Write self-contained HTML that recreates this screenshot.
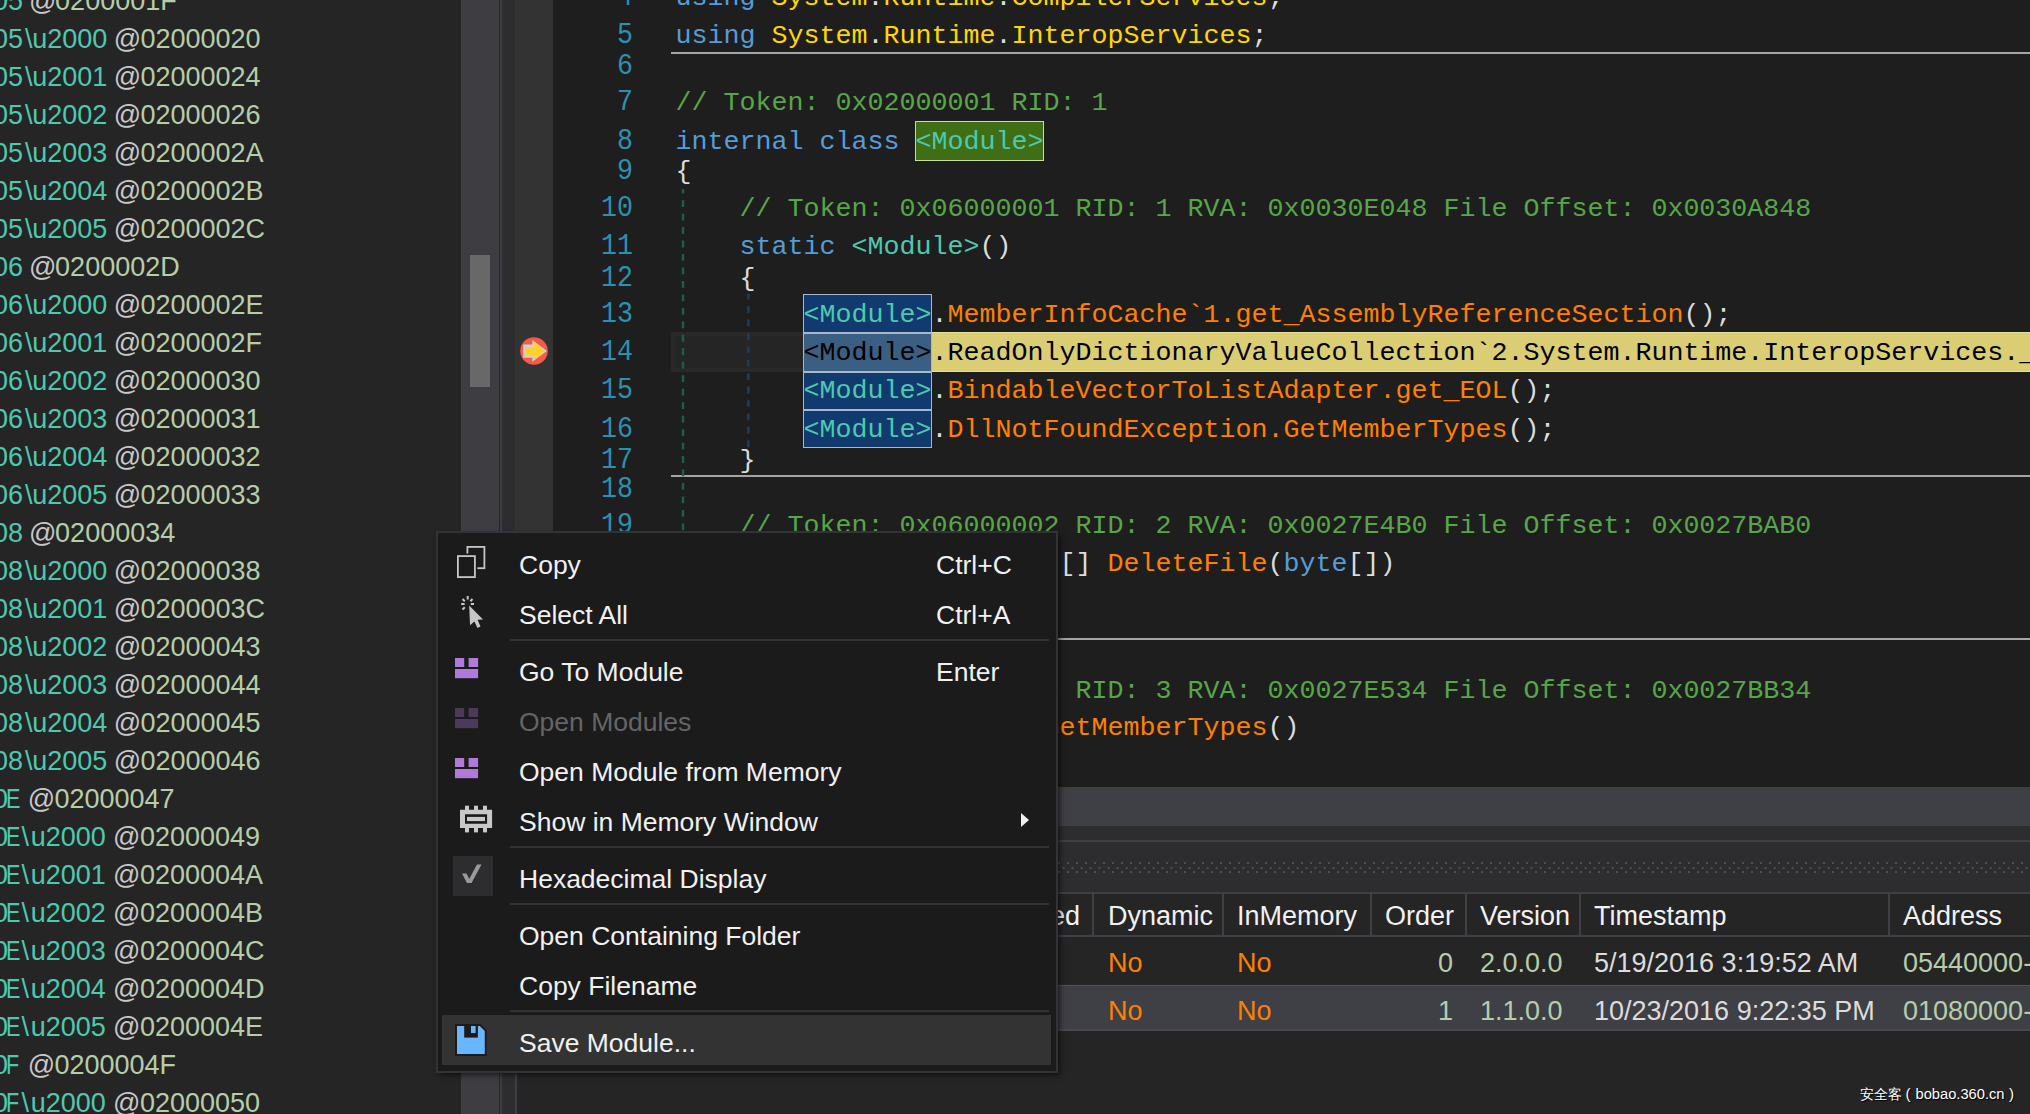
<!DOCTYPE html><html><head><meta charset="utf-8"><style>
*{margin:0;padding:0;box-sizing:border-box}
html,body{width:2030px;height:1114px;overflow:hidden;background:#1e1e1e}
.a{position:absolute}
.mono{font-family:"Liberation Mono",monospace;font-size:26.67px;line-height:40px;white-space:pre}
.sans{font-family:"Liberation Sans",sans-serif;white-space:pre}
.kw{color:#569cd6}.ns{color:#ffd700}.cm{color:#57a64a}.ty{color:#4ec9b0}.me{color:#ff8000}.pu{color:#dcdcdc}
.ln{color:#2b91af;text-align:right;width:80px}
.lp{font-size:27px;line-height:40px}
.t{color:#4ec9b0}.at{color:#c8c8c8}.hx{color:#b5cea8}
.mi{font-size:26.5px;line-height:40px;color:#f1f1f1}
</style></head><body>
<div class="a" style="left:0;top:0;width:461px;height:1114px;background:#252526"></div>
<div class="a sans lp t" style="left:-7px;top:-19px">05</div>
<div class="a sans lp at" style="left:29px;top:-19px">@</div>
<div class="a sans lp hx" style="left:55.1px;top:-19px">0200001F</div>
<div class="a sans lp t" style="left:-7px;top:19px">05</div>
<div class="a sans lp t" style="left:25px;top:19px">\</div>
<div class="a sans lp t" style="left:32.2px;top:19px">u2000</div>
<div class="a sans lp at" style="left:113.8px;top:19px">@</div>
<div class="a sans lp hx" style="left:140.4px;top:19px">02000020</div>
<div class="a sans lp t" style="left:-7px;top:57px">05</div>
<div class="a sans lp t" style="left:25px;top:57px">\</div>
<div class="a sans lp t" style="left:32.2px;top:57px">u2001</div>
<div class="a sans lp at" style="left:113.8px;top:57px">@</div>
<div class="a sans lp hx" style="left:140.4px;top:57px">02000024</div>
<div class="a sans lp t" style="left:-7px;top:95px">05</div>
<div class="a sans lp t" style="left:25px;top:95px">\</div>
<div class="a sans lp t" style="left:32.2px;top:95px">u2002</div>
<div class="a sans lp at" style="left:113.8px;top:95px">@</div>
<div class="a sans lp hx" style="left:140.4px;top:95px">02000026</div>
<div class="a sans lp t" style="left:-7px;top:133px">05</div>
<div class="a sans lp t" style="left:25px;top:133px">\</div>
<div class="a sans lp t" style="left:32.2px;top:133px">u2003</div>
<div class="a sans lp at" style="left:113.8px;top:133px">@</div>
<div class="a sans lp hx" style="left:140.4px;top:133px">0200002A</div>
<div class="a sans lp t" style="left:-7px;top:171px">05</div>
<div class="a sans lp t" style="left:25px;top:171px">\</div>
<div class="a sans lp t" style="left:32.2px;top:171px">u2004</div>
<div class="a sans lp at" style="left:113.8px;top:171px">@</div>
<div class="a sans lp hx" style="left:140.4px;top:171px">0200002B</div>
<div class="a sans lp t" style="left:-7px;top:209px">05</div>
<div class="a sans lp t" style="left:25px;top:209px">\</div>
<div class="a sans lp t" style="left:32.2px;top:209px">u2005</div>
<div class="a sans lp at" style="left:113.8px;top:209px">@</div>
<div class="a sans lp hx" style="left:140.4px;top:209px">0200002C</div>
<div class="a sans lp t" style="left:-7px;top:247px">06</div>
<div class="a sans lp at" style="left:29px;top:247px">@</div>
<div class="a sans lp hx" style="left:55.1px;top:247px">0200002D</div>
<div class="a sans lp t" style="left:-7px;top:285px">06</div>
<div class="a sans lp t" style="left:25px;top:285px">\</div>
<div class="a sans lp t" style="left:32.2px;top:285px">u2000</div>
<div class="a sans lp at" style="left:113.8px;top:285px">@</div>
<div class="a sans lp hx" style="left:140.4px;top:285px">0200002E</div>
<div class="a sans lp t" style="left:-7px;top:323px">06</div>
<div class="a sans lp t" style="left:25px;top:323px">\</div>
<div class="a sans lp t" style="left:32.2px;top:323px">u2001</div>
<div class="a sans lp at" style="left:113.8px;top:323px">@</div>
<div class="a sans lp hx" style="left:140.4px;top:323px">0200002F</div>
<div class="a sans lp t" style="left:-7px;top:361px">06</div>
<div class="a sans lp t" style="left:25px;top:361px">\</div>
<div class="a sans lp t" style="left:32.2px;top:361px">u2002</div>
<div class="a sans lp at" style="left:113.8px;top:361px">@</div>
<div class="a sans lp hx" style="left:140.4px;top:361px">02000030</div>
<div class="a sans lp t" style="left:-7px;top:399px">06</div>
<div class="a sans lp t" style="left:25px;top:399px">\</div>
<div class="a sans lp t" style="left:32.2px;top:399px">u2003</div>
<div class="a sans lp at" style="left:113.8px;top:399px">@</div>
<div class="a sans lp hx" style="left:140.4px;top:399px">02000031</div>
<div class="a sans lp t" style="left:-7px;top:437px">06</div>
<div class="a sans lp t" style="left:25px;top:437px">\</div>
<div class="a sans lp t" style="left:32.2px;top:437px">u2004</div>
<div class="a sans lp at" style="left:113.8px;top:437px">@</div>
<div class="a sans lp hx" style="left:140.4px;top:437px">02000032</div>
<div class="a sans lp t" style="left:-7px;top:475px">06</div>
<div class="a sans lp t" style="left:25px;top:475px">\</div>
<div class="a sans lp t" style="left:32.2px;top:475px">u2005</div>
<div class="a sans lp at" style="left:113.8px;top:475px">@</div>
<div class="a sans lp hx" style="left:140.4px;top:475px">02000033</div>
<div class="a sans lp t" style="left:-7px;top:513px">08</div>
<div class="a sans lp at" style="left:29px;top:513px">@</div>
<div class="a sans lp hx" style="left:55.1px;top:513px">02000034</div>
<div class="a sans lp t" style="left:-7px;top:551px">08</div>
<div class="a sans lp t" style="left:25px;top:551px">\</div>
<div class="a sans lp t" style="left:32.2px;top:551px">u2000</div>
<div class="a sans lp at" style="left:113.8px;top:551px">@</div>
<div class="a sans lp hx" style="left:140.4px;top:551px">02000038</div>
<div class="a sans lp t" style="left:-7px;top:589px">08</div>
<div class="a sans lp t" style="left:25px;top:589px">\</div>
<div class="a sans lp t" style="left:32.2px;top:589px">u2001</div>
<div class="a sans lp at" style="left:113.8px;top:589px">@</div>
<div class="a sans lp hx" style="left:140.4px;top:589px">0200003C</div>
<div class="a sans lp t" style="left:-7px;top:627px">08</div>
<div class="a sans lp t" style="left:25px;top:627px">\</div>
<div class="a sans lp t" style="left:32.2px;top:627px">u2002</div>
<div class="a sans lp at" style="left:113.8px;top:627px">@</div>
<div class="a sans lp hx" style="left:140.4px;top:627px">02000043</div>
<div class="a sans lp t" style="left:-7px;top:665px">08</div>
<div class="a sans lp t" style="left:25px;top:665px">\</div>
<div class="a sans lp t" style="left:32.2px;top:665px">u2003</div>
<div class="a sans lp at" style="left:113.8px;top:665px">@</div>
<div class="a sans lp hx" style="left:140.4px;top:665px">02000044</div>
<div class="a sans lp t" style="left:-7px;top:703px">08</div>
<div class="a sans lp t" style="left:25px;top:703px">\</div>
<div class="a sans lp t" style="left:32.2px;top:703px">u2004</div>
<div class="a sans lp at" style="left:113.8px;top:703px">@</div>
<div class="a sans lp hx" style="left:140.4px;top:703px">02000045</div>
<div class="a sans lp t" style="left:-7px;top:741px">08</div>
<div class="a sans lp t" style="left:25px;top:741px">\</div>
<div class="a sans lp t" style="left:32.2px;top:741px">u2005</div>
<div class="a sans lp at" style="left:113.8px;top:741px">@</div>
<div class="a sans lp hx" style="left:140.4px;top:741px">02000046</div>
<div class="a sans lp t" style="left:-7px;top:779px">0</div>
<div class="a sans lp t" style="left:6.3px;top:779px;transform:scaleX(0.8);transform-origin:0 0">E</div>
<div class="a sans lp at" style="left:27.7px;top:779px">@</div>
<div class="a sans lp hx" style="left:54.5px;top:779px">02000047</div>
<div class="a sans lp t" style="left:-7px;top:817px">0</div>
<div class="a sans lp t" style="left:6.3px;top:817px;transform:scaleX(0.8);transform-origin:0 0">E</div>
<div class="a sans lp t" style="left:21.5px;top:817px">\</div>
<div class="a sans lp t" style="left:30.8px;top:817px">u2000</div>
<div class="a sans lp at" style="left:113px;top:817px">@</div>
<div class="a sans lp hx" style="left:140px;top:817px">02000049</div>
<div class="a sans lp t" style="left:-7px;top:855px">0</div>
<div class="a sans lp t" style="left:6.3px;top:855px;transform:scaleX(0.8);transform-origin:0 0">E</div>
<div class="a sans lp t" style="left:21.5px;top:855px">\</div>
<div class="a sans lp t" style="left:30.8px;top:855px">u2001</div>
<div class="a sans lp at" style="left:113px;top:855px">@</div>
<div class="a sans lp hx" style="left:140px;top:855px">0200004A</div>
<div class="a sans lp t" style="left:-7px;top:893px">0</div>
<div class="a sans lp t" style="left:6.3px;top:893px;transform:scaleX(0.8);transform-origin:0 0">E</div>
<div class="a sans lp t" style="left:21.5px;top:893px">\</div>
<div class="a sans lp t" style="left:30.8px;top:893px">u2002</div>
<div class="a sans lp at" style="left:113px;top:893px">@</div>
<div class="a sans lp hx" style="left:140px;top:893px">0200004B</div>
<div class="a sans lp t" style="left:-7px;top:931px">0</div>
<div class="a sans lp t" style="left:6.3px;top:931px;transform:scaleX(0.8);transform-origin:0 0">E</div>
<div class="a sans lp t" style="left:21.5px;top:931px">\</div>
<div class="a sans lp t" style="left:30.8px;top:931px">u2003</div>
<div class="a sans lp at" style="left:113px;top:931px">@</div>
<div class="a sans lp hx" style="left:140px;top:931px">0200004C</div>
<div class="a sans lp t" style="left:-7px;top:969px">0</div>
<div class="a sans lp t" style="left:6.3px;top:969px;transform:scaleX(0.8);transform-origin:0 0">E</div>
<div class="a sans lp t" style="left:21.5px;top:969px">\</div>
<div class="a sans lp t" style="left:30.8px;top:969px">u2004</div>
<div class="a sans lp at" style="left:113px;top:969px">@</div>
<div class="a sans lp hx" style="left:140px;top:969px">0200004D</div>
<div class="a sans lp t" style="left:-7px;top:1007px">0</div>
<div class="a sans lp t" style="left:6.3px;top:1007px;transform:scaleX(0.8);transform-origin:0 0">E</div>
<div class="a sans lp t" style="left:21.5px;top:1007px">\</div>
<div class="a sans lp t" style="left:30.8px;top:1007px">u2005</div>
<div class="a sans lp at" style="left:113px;top:1007px">@</div>
<div class="a sans lp hx" style="left:140px;top:1007px">0200004E</div>
<div class="a sans lp t" style="left:-7px;top:1045px">0</div>
<div class="a sans lp t" style="left:6.3px;top:1045px;transform:scaleX(0.8);transform-origin:0 0">F</div>
<div class="a sans lp at" style="left:27.7px;top:1045px">@</div>
<div class="a sans lp hx" style="left:54.5px;top:1045px">0200004F</div>
<div class="a sans lp t" style="left:-7px;top:1083px">0</div>
<div class="a sans lp t" style="left:6.3px;top:1083px;transform:scaleX(0.8);transform-origin:0 0">F</div>
<div class="a sans lp t" style="left:21.5px;top:1083px">\</div>
<div class="a sans lp t" style="left:30.8px;top:1083px">u2000</div>
<div class="a sans lp at" style="left:113px;top:1083px">@</div>
<div class="a sans lp hx" style="left:140px;top:1083px">02000050</div>
<div class="a" style="left:461px;top:0;width:38px;height:1114px;background:#3e3e42"></div>
<div class="a" style="left:470px;top:255px;width:20px;height:132px;background:#686868"></div>
<div class="a" style="left:499px;top:0;width:1px;height:1114px;background:#252526"></div>
<div class="a" style="left:500px;top:0;width:2px;height:1114px;background:#3e3e42"></div>
<div class="a" style="left:502px;top:0;width:13px;height:1114px;background:#2d2d30"></div>
<div class="a" style="left:515px;top:0;width:38px;height:787px;background:#333333"></div>
<div class="a" style="left:553px;top:0;width:1477px;height:787px;background:#1e1e1e"></div>
<div class="a" style="left:671px;top:52px;width:1359px;height:2px;background:#a5a5a5"></div>
<div class="a" style="left:671px;top:475px;width:1359px;height:2px;background:#a5a5a5"></div>
<div class="a" style="left:671px;top:638px;width:1359px;height:2px;background:#a5a5a5"></div>
<div class="a" style="left:671px;top:332px;width:134px;height:40px;background:#252525;border:4px solid #292929;border-right:none"></div>
<div class="a" style="left:932px;top:332px;width:1098px;height:40px;background:#dbcd73;border-top:1px solid #e6de92;border-bottom:1px solid #e6de92"></div>
<div class="a" style="left:915px;top:121px;width:129px;height:40px;background:#3f6e14;border:1px solid #c8dca0"></div>
<div class="a" style="left:803px;top:294px;width:129px;height:39px;background:#113a6e;border:1px solid #a8b8cc"></div>
<div class="a" style="left:803px;top:333px;width:129px;height:39px;background:#3a5f82;border:1px solid #a8b8cc"></div>
<div class="a" style="left:803px;top:371.5px;width:129px;height:38px;background:#113a6e;border:1px solid #a8b8cc"></div>
<div class="a" style="left:803px;top:409.5px;width:129px;height:38.5px;background:#113a6e;border:1px solid #a8b8cc"></div>
<svg class="a" style="left:681px;top:189px" width="4" height="600"><line x1="2" y1="0" x2="2" y2="600" stroke="#1d5f4f" stroke-width="2.4" stroke-dasharray="6.8 6.67" stroke-dashoffset="2.3"/></svg>
<svg class="a" style="left:746px;top:294px" width="4" height="155"><line x1="2.3" y1="0" x2="2.3" y2="155" stroke="#19405e" stroke-width="2.4" stroke-dasharray="6.8 6.6" stroke-dashoffset="1.2"/></svg>
<div class="a mono ln" style="left:553px;top:-22px;width:80px;transform:scaleY(1.12);transform-origin:0 27px">4</div>
<div class="a mono" style="left:675.6px;top:-22px"><span class="kw">using</span><span class="pu"> </span><span class="ns">System</span><span class="pu">.</span><span class="ns">Runtime</span><span class="pu">.</span><span class="ns">CompilerServices</span><span class="pu">;</span></div>
<div class="a mono ln" style="left:553px;top:16px;width:80px;transform:scaleY(1.12);transform-origin:0 27px">5</div>
<div class="a mono" style="left:675.6px;top:16px"><span class="kw">using</span><span class="pu"> </span><span class="ns">System</span><span class="pu">.</span><span class="ns">Runtime</span><span class="pu">.</span><span class="ns">InteropServices</span><span class="pu">;</span></div>
<div class="a mono ln" style="left:553px;top:47px;width:80px;transform:scaleY(1.12);transform-origin:0 27px">6</div>
<div class="a mono ln" style="left:553px;top:83px;width:80px;transform:scaleY(1.12);transform-origin:0 27px">7</div>
<div class="a mono" style="left:675.6px;top:83px"><span class="cm">// Token: 0x02000001 RID: 1</span></div>
<div class="a mono ln" style="left:553px;top:122px;width:80px;transform:scaleY(1.12);transform-origin:0 27px">8</div>
<div class="a mono" style="left:675.6px;top:122px"><span class="kw">internal</span><span class="pu"> </span><span class="kw">class</span><span class="pu"> </span><span class="ty">&lt;Module&gt;</span></div>
<div class="a mono ln" style="left:553px;top:152px;width:80px;transform:scaleY(1.12);transform-origin:0 27px">9</div>
<div class="a mono" style="left:675.6px;top:152px"><span class="pu">{</span></div>
<div class="a mono ln" style="left:553px;top:189px;width:80px;transform:scaleY(1.12);transform-origin:0 27px">10</div>
<div class="a mono" style="left:675.6px;top:189px"><span class="pu">    </span><span class="cm">// Token: 0x06000001 RID: 1 RVA: 0x0030E048 File Offset: 0x0030A848</span></div>
<div class="a mono ln" style="left:553px;top:227px;width:80px;transform:scaleY(1.12);transform-origin:0 27px">11</div>
<div class="a mono" style="left:675.6px;top:227px"><span class="pu">    </span><span class="kw">static</span><span class="pu"> </span><span class="ty">&lt;Module&gt;</span><span class="pu">()</span></div>
<div class="a mono ln" style="left:553px;top:259px;width:80px;transform:scaleY(1.12);transform-origin:0 27px">12</div>
<div class="a mono" style="left:675.6px;top:259px"><span class="pu">    {</span></div>
<div class="a mono ln" style="left:553px;top:295px;width:80px;transform:scaleY(1.12);transform-origin:0 27px">13</div>
<div class="a mono" style="left:675.6px;top:295px"><span class="pu">        </span><span class="ty">&lt;Module&gt;</span><span class="pu">.</span><span class="me">MemberInfoCache`1.get_AssemblyReferenceSection</span><span class="pu">();</span></div>
<div class="a mono ln" style="left:553px;top:333px;width:80px;transform:scaleY(1.12);transform-origin:0 27px">14</div>
<div class="a mono" style="left:675.6px;top:333px"><span class="pu">        </span><span style="color:#000">&lt;Module&gt;.ReadOnlyDictionaryValueCollection`2.System.Runtime.InteropServices._IDLDESC</span></div>
<div class="a mono ln" style="left:553px;top:371px;width:80px;transform:scaleY(1.12);transform-origin:0 27px">15</div>
<div class="a mono" style="left:675.6px;top:371px"><span class="pu">        </span><span class="ty">&lt;Module&gt;</span><span class="pu">.</span><span class="me">BindableVectorToListAdapter.get_EOL</span><span class="pu">();</span></div>
<div class="a mono ln" style="left:553px;top:410px;width:80px;transform:scaleY(1.12);transform-origin:0 27px">16</div>
<div class="a mono" style="left:675.6px;top:410px"><span class="pu">        </span><span class="ty">&lt;Module&gt;</span><span class="pu">.</span><span class="me">DllNotFoundException.GetMemberTypes</span><span class="pu">();</span></div>
<div class="a mono ln" style="left:553px;top:441px;width:80px;transform:scaleY(1.12);transform-origin:0 27px">17</div>
<div class="a mono" style="left:675.6px;top:441px"><span class="pu">    }</span></div>
<div class="a mono ln" style="left:553px;top:470px;width:80px;transform:scaleY(1.12);transform-origin:0 27px">18</div>
<div class="a mono ln" style="left:553px;top:506px;width:80px;transform:scaleY(1.12);transform-origin:0 27px">19</div>
<div class="a mono" style="left:675.6px;top:506px"><span class="pu">    </span><span class="cm">// Token: 0x06000002 RID: 2 RVA: 0x0027E4B0 File Offset: 0x0027BAB0</span></div>
<div class="a mono ln" style="left:553px;top:544px;width:80px;transform:scaleY(1.12);transform-origin:0 27px">20</div>
<div class="a mono" style="left:675.6px;top:544px"><span class="pu">    </span><span class="kw">internal</span><span class="pu"> </span><span class="kw">static</span><span class="pu"> </span><span class="kw">byte</span><span class="pu">[] </span><span class="me">DeleteFile</span><span class="pu">(</span><span class="kw">byte</span><span class="pu">[])</span></div>
<div class="a mono ln" style="left:553px;top:578px;width:80px;transform:scaleY(1.12);transform-origin:0 27px">21</div>
<div class="a mono ln" style="left:553px;top:609px;width:80px;transform:scaleY(1.12);transform-origin:0 27px">22</div>
<div class="a mono ln" style="left:553px;top:637px;width:80px;transform:scaleY(1.12);transform-origin:0 27px">23</div>
<div class="a mono ln" style="left:553px;top:671px;width:80px;transform:scaleY(1.12);transform-origin:0 27px">24</div>
<div class="a mono" style="left:675.6px;top:671px"><span class="pu">    </span><span class="cm">// Token: 0x06000003 RID: 3 RVA: 0x0027E534 File Offset: 0x0027BB34</span></div>
<div class="a mono ln" style="left:553px;top:708px;width:80px;transform:scaleY(1.12);transform-origin:0 27px">25</div>
<div class="a mono" style="left:675.6px;top:708px"><span class="pu">    </span><span class="kw">public</span><span class="pu"> </span><span class="kw">static</span><span class="pu"> </span><span class="kw">void</span><span class="pu"> </span><span class="me">GetMemberTypes</span><span class="pu">()</span></div>
<svg class="a" style="left:519px;top:336px" width="30" height="30" viewBox="0 0 30 30">
<circle cx="15" cy="15" r="13.8" fill="#f25a4a"/>
<path d="M4.2 8.5 H13.3 V4.1 L28 15 L13.3 25.8 V21.7 H4.2 Z" fill="#d0d0d0"/>
<path d="M6 11 H15.3 V6 L25.5 15 L15.3 24 V19.5 H6 Z" fill="#ffd12a"/>
</svg>
<div class="a" style="left:517px;top:787px;width:1513px;height:327px;background:#252526"></div>
<div class="a" style="left:515px;top:787px;width:2px;height:327px;background:#3e3e42"></div>
<div class="a" style="left:517px;top:787px;width:1513px;height:39px;background:#3f3f46"></div>
<div class="a" style="left:517px;top:826px;width:1513px;height:15px;background:#2d2d30"></div>
<div class="a" style="left:517px;top:840px;width:1513px;height:2px;background:#3f3f46"></div>
<div class="a" style="left:517px;top:842px;width:1513px;height:51px;background:#2d2d30"></div>
<svg class="a" style="left:517px;top:860px" width="1513" height="16"><defs><pattern id="gp" width="9" height="16" patternUnits="userSpaceOnUse"><rect x="1" y="2" width="2" height="2" fill="#4e4e54"/><rect x="5.6" y="7" width="2" height="2" fill="#4e4e54"/><rect x="1" y="11" width="2" height="2" fill="#4e4e54"/></pattern></defs><rect width="1513" height="16" fill="url(#gp)"/></svg>
<div class="a" style="left:517px;top:892px;width:1513px;height:2px;background:#3f3f46"></div>
<div class="a" style="left:517px;top:894px;width:1513px;height:41px;background:#252526"></div>
<div class="a" style="left:517px;top:935px;width:1513px;height:2px;background:#3f3f46"></div>
<div class="a" style="left:1092px;top:894px;width:2px;height:41px;background:#3f3f46"></div>
<div class="a" style="left:1222px;top:894px;width:2px;height:41px;background:#3f3f46"></div>
<div class="a" style="left:1370px;top:894px;width:2px;height:41px;background:#3f3f46"></div>
<div class="a" style="left:1465px;top:894px;width:2px;height:41px;background:#3f3f46"></div>
<div class="a" style="left:1579px;top:894px;width:2px;height:41px;background:#3f3f46"></div>
<div class="a" style="left:1888px;top:894px;width:2px;height:41px;background:#3f3f46"></div>
<div class="a" style="left:517px;top:985px;width:1513px;height:46px;background:#3f3f46;border-top:1px solid #555558;border-bottom:2px solid #4a4a50"></div>
<div class="a sans" style="left:780px;width:300px;text-align:right;top:896px;font-size:27px;line-height:40px;color:#f1f1f1">Loaded</div>
<div class="a sans" style="left:1108px;top:896px;font-size:27px;line-height:40px;color:#f1f1f1">Dynamic</div>
<div class="a sans" style="left:1237px;top:896px;font-size:27px;line-height:40px;color:#f1f1f1">InMemory</div>
<div class="a sans" style="left:1385px;top:896px;font-size:27px;line-height:40px;color:#f1f1f1">Order</div>
<div class="a sans" style="left:1480px;top:896px;font-size:27px;line-height:40px;color:#f1f1f1">Version</div>
<div class="a sans" style="left:1594px;top:896px;font-size:27px;line-height:40px;color:#f1f1f1">Timestamp</div>
<div class="a sans" style="left:1903px;top:896px;font-size:27px;line-height:40px;color:#f1f1f1">Address</div>
<div class="a sans" style="left:1108px;top:943px;font-size:27px;line-height:40px;color:#ff8000">No</div>
<div class="a sans" style="left:1237px;top:943px;font-size:27px;line-height:40px;color:#ff8000">No</div>
<div class="a sans" style="left:1153px;width:300px;text-align:right;top:943px;font-size:27px;line-height:40px;color:#b5cea8">0</div>
<div class="a sans" style="left:1480px;top:943px;font-size:27px;line-height:40px;color:#b5cea8">2.0.0.0</div>
<div class="a sans" style="left:1594px;top:943px;font-size:27px;line-height:40px;color:#dcdcdc">5/19/2016 3:19:52 AM</div>
<div class="a sans" style="left:1903px;top:943px;font-size:27px;line-height:40px;color:#b5cea8">05440000-0545E000</div>
<div class="a sans" style="left:1108px;top:991px;font-size:27px;line-height:40px;color:#ff8000">No</div>
<div class="a sans" style="left:1237px;top:991px;font-size:27px;line-height:40px;color:#ff8000">No</div>
<div class="a sans" style="left:1153px;width:300px;text-align:right;top:991px;font-size:27px;line-height:40px;color:#b5cea8">1</div>
<div class="a sans" style="left:1480px;top:991px;font-size:27px;line-height:40px;color:#b5cea8">1.1.0.0</div>
<div class="a sans" style="left:1594px;top:991px;font-size:27px;line-height:40px;color:#dcdcdc">10/23/2016 9:22:35 PM</div>
<div class="a sans" style="left:1903px;top:991px;font-size:27px;line-height:40px;color:#b5cea8">01080000-0109C000</div>
<div class="a sans" style="left:1860px;top:1085px;font-size:13.7px;text-shadow:1px 1px 1px #000;color:#fff;line-height:20px">安全客</div>
<div class="a sans" style="left:1905.5px;top:1084px;font-size:15px;text-shadow:1px 1px 1px #000;color:#fff;line-height:20px">(</div>
<div class="a sans" style="left:1915.5px;top:1084.4px;font-size:14.7px;text-shadow:1px 1px 1px #000;color:#fff;line-height:20px">bobao.360.cn</div>
<div class="a sans" style="left:2009px;top:1084px;font-size:15px;text-shadow:1px 1px 1px #000;color:#fff;line-height:20px">)</div>
<div class="a" style="left:436px;top:531px;width:622px;height:542px;background:#1b1b1c;border:2px solid #333337;box-shadow:3px 3px 6px -1px rgba(0,0,0,0.6)"></div>
<div class="a" style="left:442px;top:1015px;width:609px;height:50px;background:#333334"></div>
<div class="a" style="left:510px;top:639px;width:539px;height:2px;background:#333337"></div>
<div class="a" style="left:510px;top:846px;width:539px;height:2px;background:#333337"></div>
<div class="a" style="left:510px;top:903px;width:539px;height:2px;background:#333337"></div>
<div class="a" style="left:510px;top:1010px;width:539px;height:2px;background:#333337"></div>
<div class="a sans mi" style="left:519px;top:545px;color:#f1f1f1">Copy</div>
<div class="a sans mi" style="left:936px;top:545px;color:#f1f1f1">Ctrl+C</div>
<div class="a sans mi" style="left:519px;top:595px;color:#f1f1f1">Select All</div>
<div class="a sans mi" style="left:936px;top:595px;color:#f1f1f1">Ctrl+A</div>
<div class="a sans mi" style="left:519px;top:652px;color:#f1f1f1">Go To Module</div>
<div class="a sans mi" style="left:936px;top:652px;color:#f1f1f1">Enter</div>
<div class="a sans mi" style="left:519px;top:702px;color:#656565">Open Modules</div>
<div class="a sans mi" style="left:519px;top:752px;color:#f1f1f1">Open Module from Memory</div>
<div class="a sans mi" style="left:519px;top:802px;color:#f1f1f1">Show in Memory Window</div>
<div class="a sans mi" style="left:519px;top:859px;color:#f1f1f1">Hexadecimal Display</div>
<div class="a sans mi" style="left:519px;top:916px;color:#f1f1f1">Open Containing Folder</div>
<div class="a sans mi" style="left:519px;top:966px;color:#f1f1f1">Copy Filename</div>
<div class="a sans mi" style="left:519px;top:1023px;color:#f1f1f1">Save Module...</div>
<svg class="a" style="left:1018px;top:810px" width="14" height="20"><path d="M3 3 L11 10 L3 17 Z" fill="#f1f1f1"/></svg>
<svg class="a" style="left:450px;top:540px" width="45" height="45">
<rect x="17.4" y="6.9" width="17" height="21.3" fill="#1b1b1c" stroke="#c6c6c6" stroke-width="1.8"/>
<rect x="7.9" y="16.1" width="17" height="21" fill="#1b1b1c" stroke="#1b1b1c" stroke-width="5"/>
<rect x="7.9" y="16.1" width="17" height="21" fill="#1b1b1c" stroke="#c6c6c6" stroke-width="1.8"/>
</svg>
<svg class="a" style="left:450px;top:590px" width="45" height="45">
<path d="M19.2 15.5 L33 29.5 L27.6 29.8 L30.5 36.5 L27.5 38 L24.4 31.4 L20 35.2 Z" fill="#c6c6c6"/>
<g stroke="#c6c6c6" stroke-width="2">
<line x1="17.7" y1="6" x2="17.7" y2="9.5"/><line x1="22.5" y1="9" x2="20.4" y2="11.2"/><line x1="24" y1="14" x2="20.8" y2="14"/>
<line x1="11.2" y1="14" x2="14.6" y2="14"/><line x1="12.5" y1="9" x2="14.8" y2="11.2"/><line x1="12.5" y1="19.5" x2="14.8" y2="17.2"/>
</g></svg>
<svg class="a" style="left:455px;top:657.8px" width="24" height="21">
<rect x="0" y="0" width="9.2" height="9" fill="#b07ada"/><rect x="13.6" y="0" width="9.5" height="9" fill="#b07ada"/><rect x="0" y="11" width="23.1" height="9.2" fill="#b07ada"/></svg>
<svg class="a" style="left:455px;top:707.8px" width="24" height="21">
<rect x="0" y="0" width="9.2" height="9" fill="#4b3a5a"/><rect x="13.6" y="0" width="9.5" height="9" fill="#4b3a5a"/><rect x="0" y="11" width="23.1" height="9.2" fill="#4b3a5a"/></svg>
<svg class="a" style="left:455px;top:757.9px" width="24" height="21">
<rect x="0" y="0" width="9.2" height="9" fill="#b07ada"/><rect x="13.6" y="0" width="9.5" height="9" fill="#b07ada"/><rect x="0" y="11" width="23.1" height="9.2" fill="#b07ada"/></svg>
<svg class="a" style="left:459px;top:805px" width="34" height="28">
<g fill="#c8c8c8">
<rect x="6" y="0.7" width="4" height="5"/><rect x="15" y="0.7" width="4" height="5"/><rect x="24" y="0.7" width="4" height="5"/>
<rect x="6" y="22" width="4" height="5.4"/><rect x="15" y="22" width="4" height="5.4"/><rect x="24" y="22" width="4" height="5.4"/>
<path fill-rule="evenodd" d="M1 4.7 H33.1 V23.1 H1 Z M6 9.2 V18.8 H28.1 V9.2 Z"/>
<rect x="8" y="11.9" width="18" height="4.2"/>
</g></svg>
<div class="a" style="left:453px;top:856px;width:40px;height:40px;background:#2d2d30"></div>
<svg class="a" style="left:453px;top:856px" width="40" height="40"><path d="M9 17.5 L13.5 17.5 L16.2 23 L24 8.5 L28.5 8.5 L18.5 27 L14 27 Z" fill="#9a9a9a"/></svg>
<svg class="a" style="left:455px;top:1024px" width="32" height="32">
<path d="M0 0 H25.5 L31.6 6.2 V32 H0 Z" fill="#1b1b1c"/>
<path d="M2 2 H24.8 L29.8 7 V30 H2 Z" fill="#6ab5ff"/>
<rect x="9.2" y="2" width="13.7" height="11.6" fill="#1b1b1c"/>
<rect x="16" y="2" width="4.6" height="7" fill="#6ab5ff"/>
</svg>
</body></html>
